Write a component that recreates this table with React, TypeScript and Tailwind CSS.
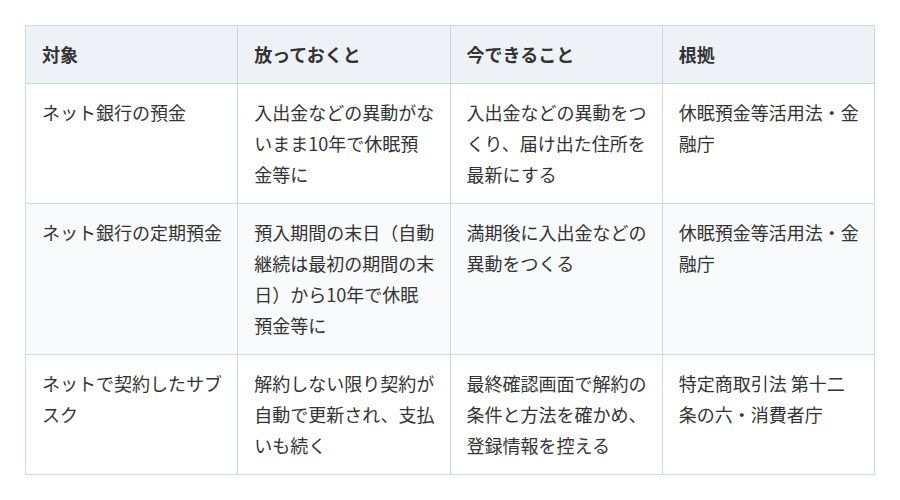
import React from "react";

const headers = ["対象", "放っておくと", "今できること", "根拠"];

const rows: string[][] = [
  [
    "ネット銀行の預金",
    "入出金などの異動がないまま10年で休眠預金等に",
    "入出金などの異動をつくり、届け出た住所を最新にする",
    "休眠預金等活用法・金融庁",
  ],
  [
    "ネット銀行の定期預金",
    "預入期間の末日（自動継続は最初の期間の末日）から10年で休眠預金等に",
    "満期後に入出金などの異動をつくる",
    "休眠預金等活用法・金融庁",
  ],
  [
    "ネットで契約したサブスク",
    "解約しない限り契約が自動で更新され、支払いも続く",
    "最終確認画面で解約の条件と方法を確かめ、登録情報を控える",
    "特定商取引法 第十二条の六・消費者庁",
  ],
];

export default function App() {
  return (
    <div
      className="w-[900px] h-[500px] bg-white pt-[25px] pl-[25px]"
      style={{ fontFamily: '"Noto Sans CJK JP", "Noto Sans", sans-serif' }}
    >
      <table className="w-[850px] border-collapse table-fixed text-[18px] leading-[31px] text-[#333333]">
        <thead>
          <tr className="bg-[#eef2f7]">
            {headers.map((h) => (
              <th
                key={h}
                className="border border-[#cfd7df] pl-[16px] pr-[14.5px] py-[13px] text-left font-bold align-top"
              >
                {h}
              </th>
            ))}
          </tr>
        </thead>
        <tbody>
          {rows.map((r, i) => (
            <tr key={i} className={i === 1 ? "bg-[#f8fafc]" : "bg-white"}>
              {r.map((c, j) => (
                <td
                  key={j}
                  className="border border-[#cfd7df] pl-[16px] pr-[14.5px] py-[13px] align-top"
                >
                  {c}
                </td>
              ))}
            </tr>
          ))}
        </tbody>
      </table>
    </div>
  );
}
